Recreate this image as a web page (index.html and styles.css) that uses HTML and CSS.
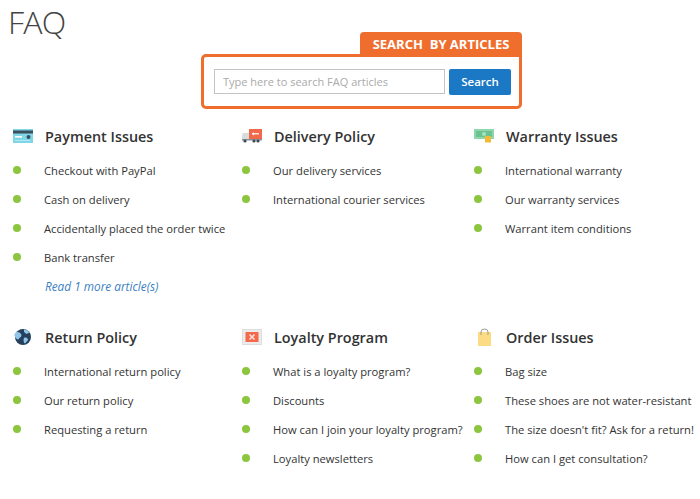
FILE: index.html
```html
<!DOCTYPE html>
<html lang="en">
<head>
<meta charset="utf-8">
<title>FAQ</title>
<link rel="stylesheet" href="styles.css">
</head>
<body>
<h1 class="page-title">FAQ</h1>
<div class="search-wrap">
  <div class="search-tab">SEARCH&nbsp; BY ARTICLES</div>
  <form class="search-box">
    <input class="search-input" type="text" placeholder="Type here to search FAQ articles">
    <button class="search-btn" type="button">Search</button>
  </form>
</div>
<div class="faq-grid">
  <section class="topic">
    <h2 class="topic-head">
      <svg class="topic-icon" viewBox="0 0 20 14"><rect width="20" height="14" fill="#7fd6e6"/><rect y="1.5" width="20" height="3" fill="#3c4f5e"/><rect x="2" y="7" width="7" height="1.6" fill="#fff"/><circle cx="15.5" cy="8" r="2" fill="#3c4f5e"/><rect x="2" y="11" width="15" height="1" fill="#b5e8f1"/></svg>
      <span>Payment Issues</span>
    </h2>
    <ul class="topic-list">
      <li>Checkout with PayPal</li>
      <li>Cash on delivery</li>
      <li>Accidentally placed the order twice</li>
      <li>Bank transfer</li>
    </ul>
    <a class="more" href="#">Read 1 more article(s)</a>
  </section>
  <section class="topic">
    <h2 class="topic-head">
      <svg class="topic-icon" viewBox="0 0 20 14"><rect x="7" y="0" width="13" height="10" fill="#f0694a"/><rect x="10" y="4.2" width="7" height="1.2" fill="#fff"/><path d="M10 4.8l2-1.6v3.2z" fill="#fff"/><path d="M1 4h6v7H0V6z" fill="#d9dbdc"/><rect y="10" width="20" height="1.5" fill="#8a9197"/><circle cx="3" cy="12" r="1.6" fill="#3c4a55"/><circle cx="12" cy="12" r="1.6" fill="#3c4a55"/><circle cx="16" cy="12" r="1.6" fill="#3c4a55"/></svg>
      <span>Delivery Policy</span>
    </h2>
    <ul class="topic-list">
      <li>Our delivery services</li>
      <li>International courier services</li>
    </ul>
  </section>
  <section class="topic">
    <h2 class="topic-head">
      <svg class="topic-icon" viewBox="0 0 20 14"><rect y="0" width="20" height="10" fill="#8cd8aa"/><rect x="2" y="2" width="16" height="6" fill="#6cc290"/><circle cx="10" cy="5" r="2" fill="#a5e2bd"/><rect x="11" y="7" width="6" height="6.5" fill="#f5b93a"/></svg>
      <span>Warranty Issues</span>
    </h2>
    <ul class="topic-list">
      <li>International warranty</li>
      <li>Our warranty services</li>
      <li>Warrant item conditions</li>
    </ul>
  </section>
  <section class="topic">
    <h2 class="topic-head">
      <svg class="topic-icon" viewBox="0 0 20 16"><circle cx="10" cy="8" r="8" fill="#24405c"/><path d="M3 3.5c2-1 4 0 5 1.5s0 3-1 3.5-1 2-2 2-3-2-3.5-3.5S2 4 3 3.5zM11 .5c2 0 4 1 5.500 3l-3 1.500-2.500-2zM11 9c2-1 4 0 4 2l-3 3.500c-1 0-2-3.500-1-5.500z" fill="#8fc5e8"/></svg>
      <span>Return Policy</span>
    </h2>
    <ul class="topic-list">
      <li>International return policy</li>
      <li>Our return policy</li>
      <li>Requesting a return</li>
    </ul>
  </section>
  <section class="topic">
    <h2 class="topic-head">
      <svg class="topic-icon" viewBox="0 0 20 16"><rect x="0.5" y="0.5" width="19" height="15" fill="#ececec" stroke="#c4c4c4" stroke-dasharray="1 1"/><rect x="3.5" y="3" width="13" height="10" fill="#f4694c"/><path d="M7.5 5.500l5 5M12.500 5.500l-5 5" stroke="#fde3dc" stroke-width="1.600"/></svg>
      <span>Loyalty Program</span>
    </h2>
    <ul class="topic-list">
      <li>What is a loyalty program?</li>
      <li>Discounts</li>
      <li>How can I join your loyalty program?</li>
      <li>Loyalty newsletters</li>
    </ul>
  </section>
  <section class="topic">
    <h2 class="topic-head">
      <svg class="topic-icon topic-icon-tall" viewBox="0 0 20 18"><rect x="4" y="4" width="13" height="14" fill="#fbdc85"/><path d="M7 7V4a3.500 3 0 0 1 7 0v3" fill="none" stroke="#9a9a92" stroke-width="1"/></svg>
      <span>Order Issues</span>
    </h2>
    <ul class="topic-list">
      <li>Bag size</li>
      <li>These shoes are not water-resistant</li>
      <li>The size doesn't fit? Ask for a return!</li>
      <li>How can I get consultation?</li>
    </ul>
  </section>
</div>
</body>
</html>
```
FILE: styles.css
```css
html, body { margin: 0; padding: 0; background: #fff; }
body { font-family: "Open Sans", "Liberation Sans", sans-serif; color: #333; padding-left: 9px; overflow-x: hidden; }
.page-title { margin: 0 0 0 -1px; padding-top: 2px; height: 30px; font-size: 32px; line-height: 40px; font-weight: 300; color: #444; letter-spacing: -0.8px; }
.search-wrap { width: 321px; margin-left: 192px; display: flex; flex-direction: column; align-items: flex-end; }
.search-tab { height: 22px; width: 162px; box-sizing: border-box; background: #ef6e2e; color: #fff; border-radius: 4px 4px 0 0; font-family: "Open Sans", sans-serif; font-weight: 700; font-size: 13px; line-height: 24px; text-align: center; white-space: nowrap; }
.search-box { height: 55px; width: 321px; box-sizing: border-box; border: 3px solid #ef6e2e; border-radius: 5px; border-top-right-radius: 0; display: flex; align-items: center; gap: 4px; padding-left: 10px; margin: 0; }
.search-input { width: 231px; height: 25px; box-sizing: border-box; border: 1px solid #c4c4c4; padding: 0 8px; font-family: inherit; font-size: 11px; color: #333; margin: 0; border-radius: 0; outline: none; }
.search-input::placeholder { color: #aaa; opacity: 1; }
.search-btn { width: 62px; height: 26px; background: #1b78c4; color: #fff; border: 0; border-radius: 2px; font-family: inherit; font-weight: 600; font-size: 11.5px; padding: 0; }
.faq-grid { display: grid; grid-template-columns: 229px 232px 230px; row-gap: 23px; margin-top: 14px; padding-left: 4px; }
.topic-head { display: flex; align-items: center; margin: 0; height: 26px; font-size: 14.4px; font-weight: 600; color: #333; }
.topic-icon { width: 20px; height: 16px; margin-right: 12px; flex: none; }
.topic-icon-tall { height: 18px; }
.topic-list { list-style: none; margin: 7px 0 0; padding: 0; }
.topic-list li { position: relative; height: 29px; line-height: 29px; padding-left: 31px; font-size: 11.2px; color: #333; white-space: nowrap; }
.topic-list li::before { content: ""; position: absolute; left: 0; top: 10px; width: 8px; height: 8px; border-radius: 50%; background: #8cc63f; }
.more { display: block; margin-left: 32px; line-height: 29px; font-size: 11.8px; font-style: italic; color: #3d7fc4; text-decoration: none; }
```
